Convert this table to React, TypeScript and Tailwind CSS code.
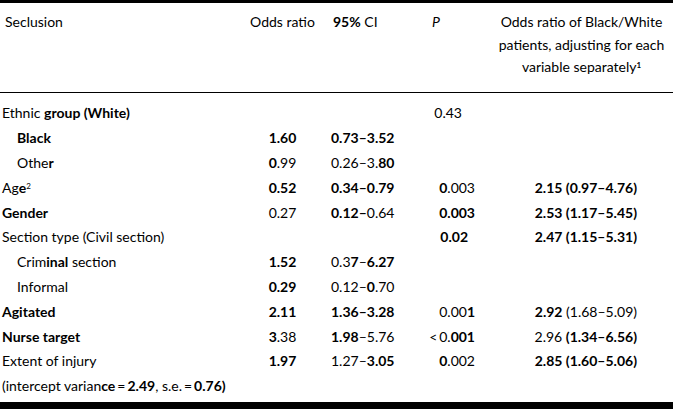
import React from "react";

// "*" toggles bold inside a cell string
function Rich({ text }: { text: string }) {
  const parts = text.split("*");
  return (
    <>
      {parts.map((p, i) =>
        i % 2 === 1 ? (
          <span key={i} className="font-bold">
            {p}
          </span>
        ) : (
          <span key={i}>{p}</span>
        )
      )}
    </>
  );
}

type Row = {
  label: string;
  sup?: string;
  indent?: boolean;
  or?: string;
  ci?: string;
  p?: string;
  pPad?: string;
  adj?: string;
};

const rows: Row[] = [
  { label: "Ethnic *group (White)*", p: "0.43", pPad: "pr-[28px]" },
  { label: "*Black*", indent: true, or: "*1.60*", ci: "*0.73–3.52*" },
  { label: "Othe*r*", indent: true, or: "*0*.99", ci: "0.26–3.*80*" },
  { label: "Ag*e*", sup: "2", or: "*0.52*", ci: "*0.34–0.79*", p: "*0*.003", adj: "*2.15 (0.97–4.76)*" },
  { label: "*Gender*", or: "0.27", ci: "*0.12–*0.64", p: "*0.003*", adj: "*2.53 (1.17–5.45)*" },
  { label: "Section type (Civil section)", p: "*0.02*", pPad: "pr-[22px]", adj: "*2.47 (1.15–5.31)*" },
  { label: "Crim*inal* section", indent: true, or: "*1.52*", ci: "0.3*7*–*6.27*" },
  { label: "Informal", indent: true, or: "*0.29*", ci: "0.12–*0*.70" },
  { label: "*Agitated*", or: "*2.11*", ci: "*1.36–3.28*", p: "0.00*1*", adj: "*2.92* (1.68–5.09)" },
  { label: "*Nurse target*", or: "*3*.38", ci: "*1.98*–5.76", p: "<\u20090.*001*", adj: "2.96 *(1.34–6.56)*" },
  { label: "Extent of injury", or: "*1.97*", ci: "1.27–*3.05*", p: "*0*.002", adj: "*2.85 (1.60–5.06)*" },
];

export default function App() {
  return (
    <div
      className="w-[673px] h-[409px] bg-white text-black text-[14px] overflow-hidden"
      style={{ fontFamily: "Lato, 'Open Sans', sans-serif" }}
    >
      <div className="h-[3px] bg-black" />

      {/* header */}
      <div className="grid grid-cols-[240px_85px_90px_75px_183px] pt-[8px] pb-[13px] border-b border-black leading-[22.5px] whitespace-nowrap">
        <div className="pl-[5px]">Seclusion</div>
        <div className="text-center">Odds ratio</div>
        <div className="pl-[8px]">
          <span className="font-bold">95%</span> CI
        </div>
        <div className="pl-[17px] italic">P</div>
        <div className="text-center">
          Odds ratio of Black/White
          <br />
          patients, adjusting for each
          <br />
          variable separately<sup className="font-bold text-[8px]">1</sup>
        </div>
      </div>

      {/* body */}
      <div className="pt-[8px]">
        {rows.map((r, i) => (
          <div
            key={i}
            className="grid grid-cols-[240px_85px_90px_75px_183px] h-[24.8px] items-center whitespace-nowrap"
          >
            <div className={r.indent ? "pl-[17px]" : "pl-[2px]"}>
              <Rich text={r.label} />
              {r.sup && <sup className="text-[8px]">{r.sup}</sup>}
            </div>
            <div className="text-center">{r.or && <Rich text={r.or} />}</div>
            <div className="pl-[6px]">{r.ci && <Rich text={r.ci} />}</div>
            <div className={"text-right " + (r.pPad ?? "pr-[15px]")}>
              {r.p && <Rich text={r.p} />}
            </div>
            <div className="text-right pr-[36px]">{r.adj && <Rich text={r.adj} />}</div>
          </div>
        ))}
        <div className="h-[24.8px] flex items-center pl-[2px] whitespace-nowrap">
          <Rich text="(intercept varian*ce*" />
          <span className="mx-[2px]">=</span>
          <Rich text="*2.49*, s.e." />
          <span className="mx-[2px]">=</span>
          <Rich text="*0.76)*" />
        </div>
      </div>

      <div className="mt-[4px] h-[7px] bg-black" />
    </div>
  );
}
